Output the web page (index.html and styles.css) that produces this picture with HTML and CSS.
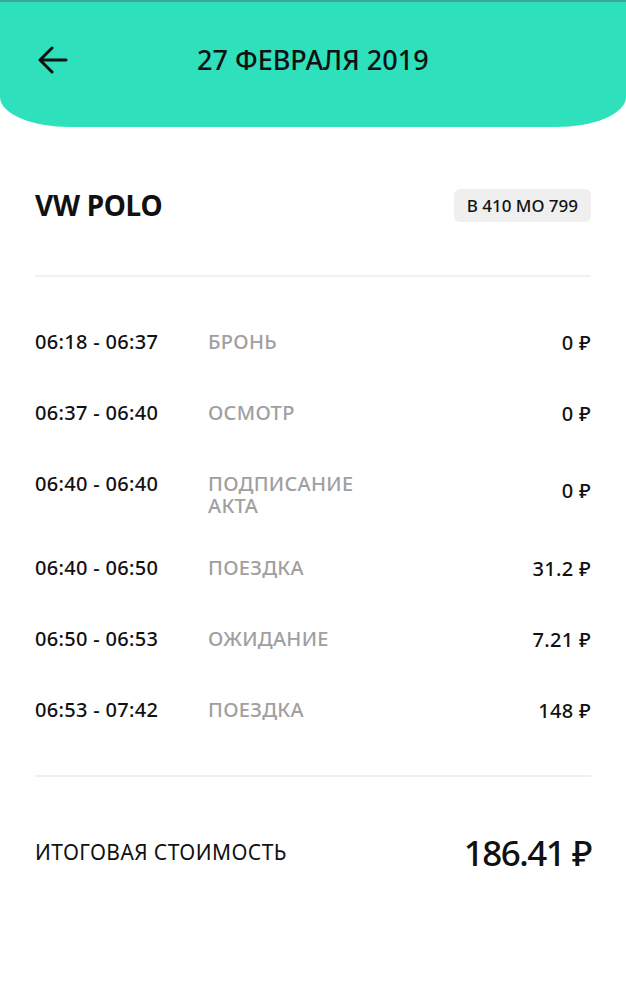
FILE: index.html
```html
<!DOCTYPE html>
<html lang="ru">
<head>
  <meta charset="UTF-8">
  <meta name="viewport" content="width=device-width, initial-scale=1.0">
  <title>Поездка</title>
  <link rel="stylesheet" href="styles.css">
</head>
<body>
  <header class="top">
    <a class="back" href="#">
      <svg width="30" height="28" viewBox="0 0 30 28">
        <path d="M28 14H3M14 2L2 14l12 12" fill="none" stroke="#111" stroke-width="3" stroke-linecap="round" stroke-linejoin="round"/>
      </svg>
    </a>
    <h1>27 ФЕВРАЛЯ 2019</h1>
  </header>

  <div class="content">
    <div class="car">
      <h2>VW POLO</h2>
      <span class="plate">В 410 МО 799</span>
    </div>

    <div class="rows">
      <div class="row">
        <span class="time">06:18 - 06:37</span>
        <span class="label">БРОНЬ</span>
        <span class="price">0 ₽</span>
      </div>
      <div class="row">
        <span class="time">06:37 - 06:40</span>
        <span class="label">ОСМОТР</span>
        <span class="price">0 ₽</span>
      </div>
      <div class="row tall">
        <span class="time">06:40 - 06:40</span>
        <span class="label">ПОДПИСАНИЕ<br>АКТА</span>
        <span class="price">0 ₽</span>
      </div>
      <div class="row">
        <span class="time">06:40 - 06:50</span>
        <span class="label">ПОЕЗДКА</span>
        <span class="price">31.2 ₽</span>
      </div>
      <div class="row">
        <span class="time">06:50 - 06:53</span>
        <span class="label">ОЖИДАНИЕ</span>
        <span class="price">7.21 ₽</span>
      </div>
      <div class="row">
        <span class="time">06:53 - 07:42</span>
        <span class="label">ПОЕЗДКА</span>
        <span class="price">148 ₽</span>
      </div>
    </div>

    <div class="total">
      <span>ИТОГОВАЯ СТОИМОСТЬ</span>
      <strong>186.41 ₽</strong>
    </div>
  </div>
</body>
</html>
```

FILE: styles.css
```css
* {
    margin: 0;
    padding: 0;
    box-sizing: border-box;
}

body {
    font-family: "Noto Sans", sans-serif;
    background: #fff;
    color: #111;
}

.top {
    height: 127px;
    background: #2ee0bc;
    border-top: 2px solid #3aa892;
    border-radius: 0 0 70px 70px / 0 0 30px 30px;
    display: flex;
    align-items: center;
    padding: 0 0 10px 38px;
}

.back {
    display: flex;
    width: 30px;
}

.top h1 {
    font-size: 27px;
    font-weight: 500;
    margin-left: 129px;
}

.content {
    padding: 0 35px;
}

.car {
    display: flex;
    justify-content: space-between;
    align-items: center;
    height: 150px;
    padding-top: 8px;
    border-bottom: 2px solid #f0f0f0;
}

.car h2 {
    font-size: 28px;
    font-weight: 700;
    letter-spacing: -0.3px;
}

.plate {
    background: #efefef;
    border-radius: 6px;
    padding: 5px 13px;
    font-size: 17px;
    font-weight: 500;
}

.rows {
    padding: 30px 0 29px;
    border-bottom: 2px solid #f0f0f0;
}

.row {
    display: flex;
    align-items: flex-start;
    height: 71px;
    padding-top: 24px;
    font-size: 20px;
    font-weight: 500;
    line-height: 22px;
    letter-spacing: 0.3px;
}

.row.tall {
    height: 84px;
}

.time {
    width: 173px;
}

.label {
    flex: 1;
    color: #a0a0a0;
}

.price {
    align-self: center;
    margin-top: -24px;
    text-align: right;
}

.total {
    display: flex;
    justify-content: space-between;
    align-items: center;
    height: 150px;
}

.total span {
    font-size: 21px;
    letter-spacing: 0.4px;
}

.total strong {
    font-size: 35px;
    font-weight: 500;
    letter-spacing: -1.5px;
}
```
